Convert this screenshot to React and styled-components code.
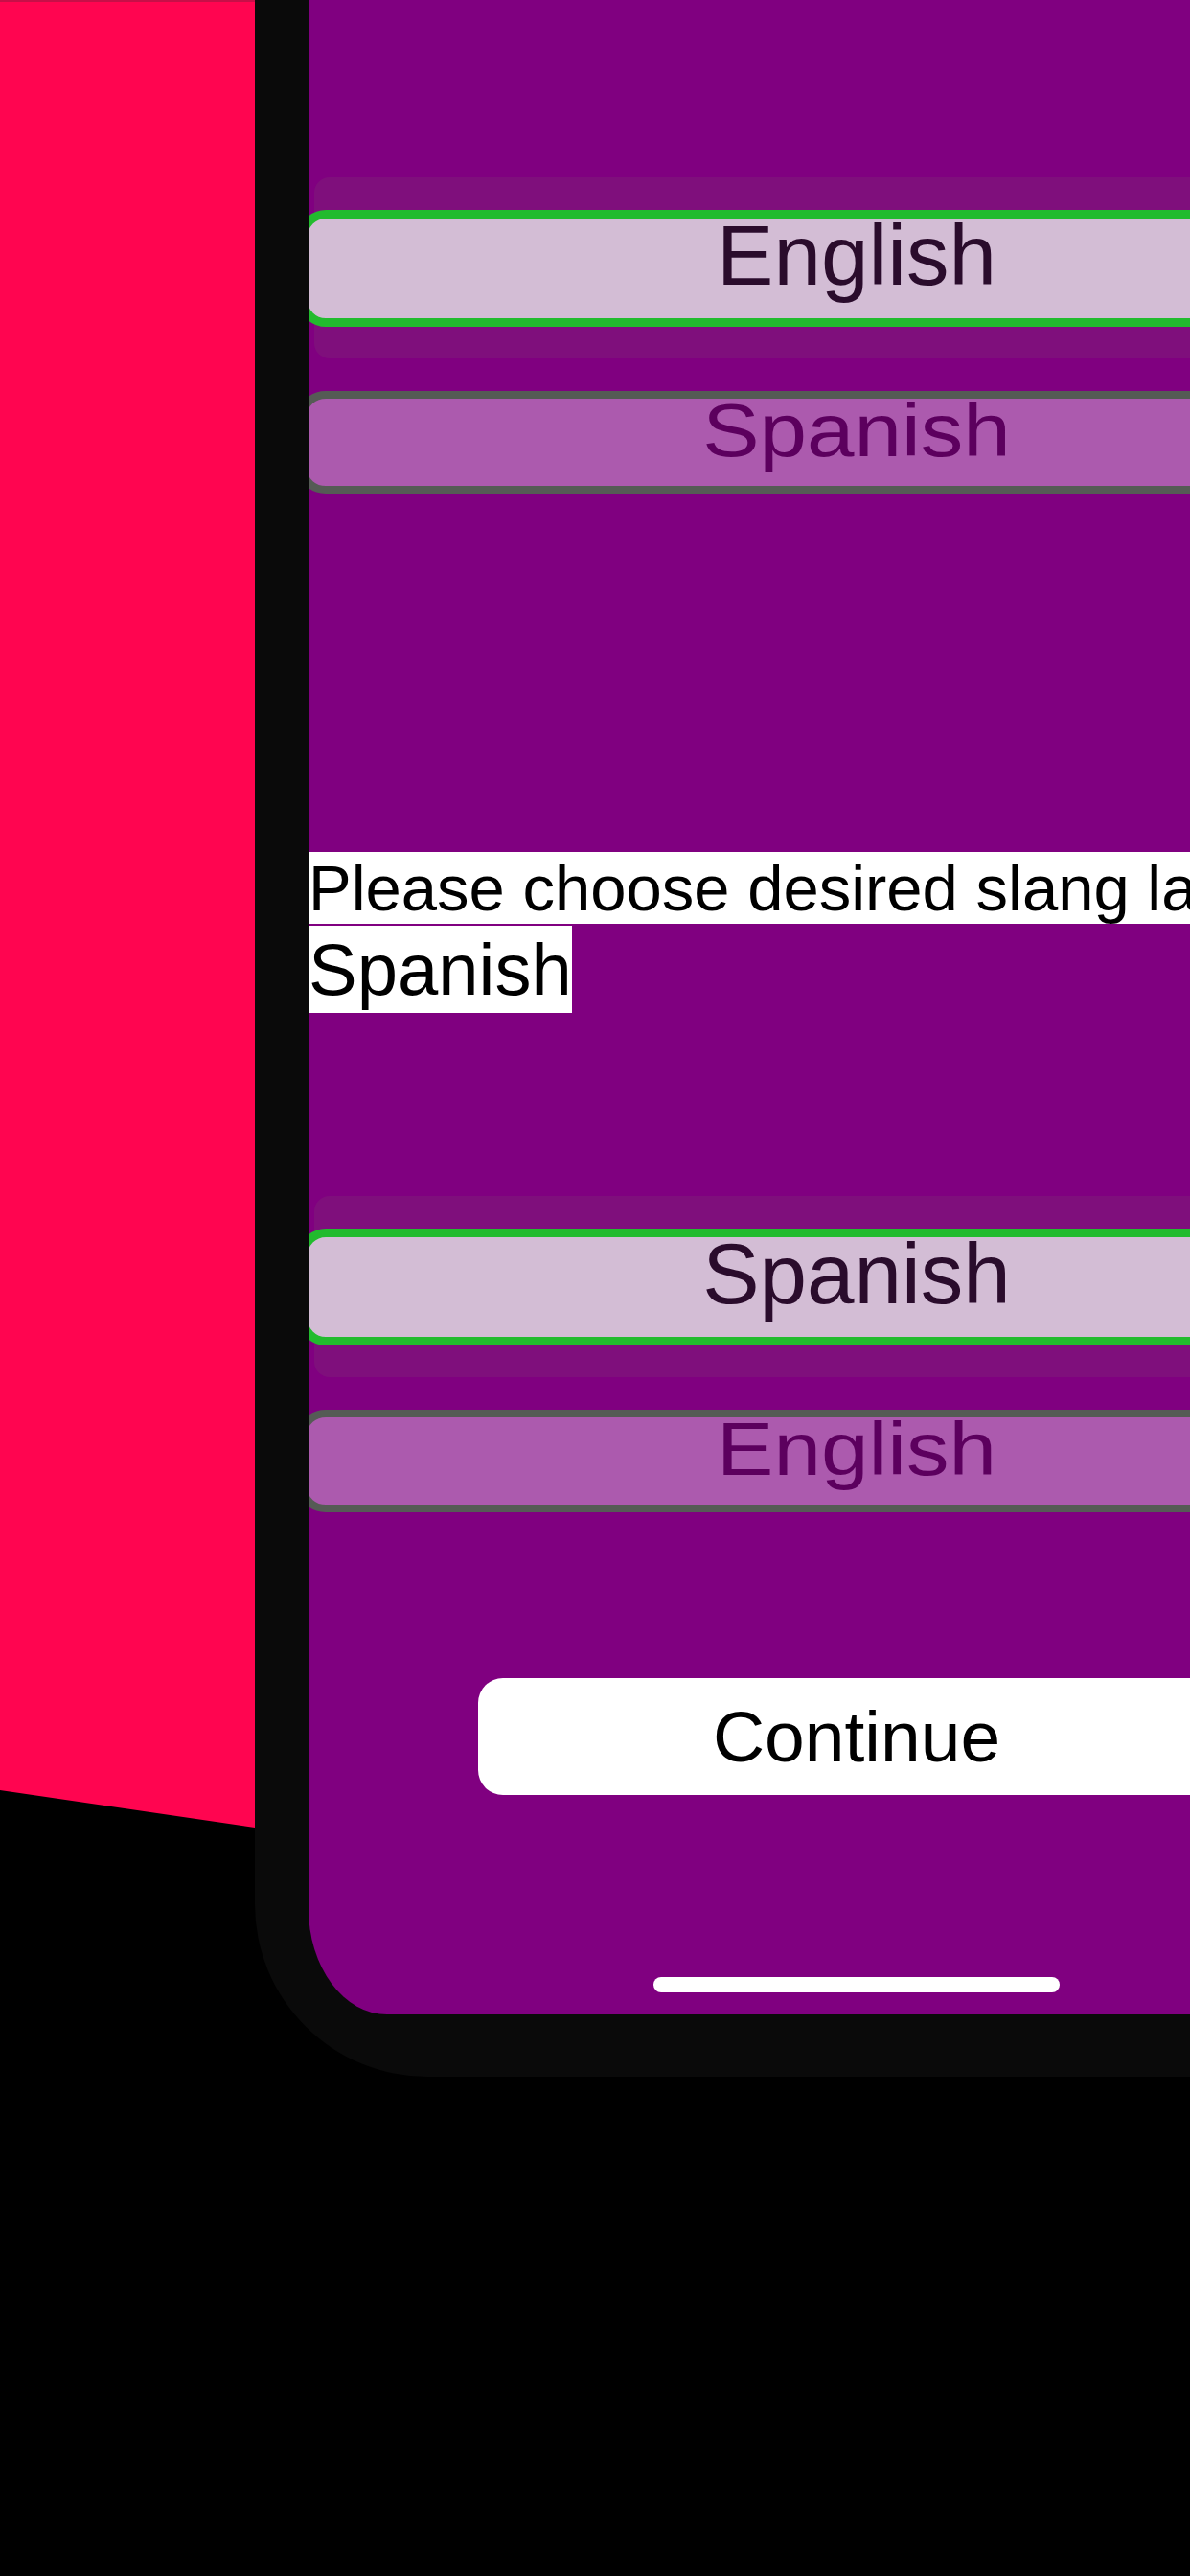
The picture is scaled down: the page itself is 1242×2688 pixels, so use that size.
import React from "react";
import styled, { createGlobalStyle, css } from "styled-components";

const Global = createGlobalStyle`
  html, body {
    margin: 0;
    padding: 0;
    background: #000;
    overflow: hidden;
  }
  * { box-sizing: border-box; }
`;

const Stage = styled.div`
  width: 1242px;
  height: 2688px;
  overflow: hidden;
  background: #000;
  display: flex;
  align-items: flex-start;
  font-family: "Liberation Sans", Arial, Helvetica, sans-serif;
`;

const Backdrop = styled.div`
  flex: 0 0 266px;
  height: 1907px;
  background: #ff0550;
  border-top: 2px solid #c70f48;
  clip-path: polygon(0 0, 100% 0, 100% 100%, 0 1868px);
`;

const Phone = styled.div`
  flex: 0 0 auto;
  background: #0a0a0a;
  padding: 0 0 65px 56px;
  border-bottom-left-radius: 180px;
`;

const Screen = styled.div`
  width: 1144px;
  height: 2102px;
  background: #800080;
  border-bottom-left-radius: 82px 110px;
  overflow: hidden;
  display: flex;
  flex-direction: column;
  padding-top: 185px;
`;

const Picker = styled.div`
  display: flex;
  flex-direction: column;
  margin-top: ${(p) => p.$gap}px;
`;

const Highlight = styled.div`
  height: 189px;
  margin: 0 6px;
  border-radius: 16px;
  background: #7f0f7c;
  display: flex;
  align-items: center;
`;

const Option = styled.div`
  flex: 0 0 auto;
  width: 1164px;
  height: 122px;
  margin: 0 -16px;
  border-radius: 28px;
  border: 9px solid;
  font-size: 89px;
  line-height: 76px;
  text-align: center;
  white-space: nowrap;
  ${(p) =>
    p.$selected
      ? css`
          border-color: #22bb2e;
          background: #d3bdd5;
          color: #2a0c2c;
        `
      : css`
          border-color: #555b55;
          background: #ac5aae;
          color: #5c005e;
          margin: 0 -10px;
          transform: scaleY(0.877);
          transform-origin: top center;
        `}
`;

const DimSlot = styled.div`
  height: 107px;
  margin-top: 34px;
  display: flex;
`;

const Prompt = styled.div`
  margin-top: 374px;
  display: flex;
  flex-direction: column;
  align-items: flex-start;
  gap: 2px;
  color: #000;
`;

const PromptLine = styled.span`
  background: #fff;
  white-space: nowrap;
  font-size: ${(p) => p.$size}px;
  line-height: ${(p) => p.$lh}px;
`;

const ContinueButton = styled.button`
  align-self: center;
  width: 790px;
  height: 122px;
  margin-top: 173px;
  border: none;
  border-radius: 26px;
  background: #fff;
  color: #000;
  font-family: inherit;
  font-size: 75px;
  display: flex;
  align-items: center;
  justify-content: center;
  padding: 0;
`;

const HomeIndicator = styled.div`
  align-self: center;
  width: 424px;
  height: 16px;
  margin-top: 190px;
  border-radius: 8px;
  background: #fff;
`;

function LanguagePicker({ selected, other, gap }) {
  return (
    <Picker $gap={gap}>
      <Highlight>
        <Option $selected>{selected}</Option>
      </Highlight>
      <DimSlot>
        <Option>{other}</Option>
      </DimSlot>
    </Picker>
  );
}

export default function App() {
  return (
    <>
      <Global />
      <Stage>
        <Backdrop />
        <Phone>
          <Screen>
            <LanguagePicker selected="English" other="Spanish" gap={0} />
            <Prompt>
              <PromptLine $size={67} $lh={75}>
                Please choose desired slang language
              </PromptLine>
              <PromptLine $size={76} $lh={91}>
                Spanish
              </PromptLine>
            </Prompt>
            <LanguagePicker selected="Spanish" other="English" gap={191} />
            <ContinueButton>Continue</ContinueButton>
            <HomeIndicator />
          </Screen>
        </Phone>
      </Stage>
    </>
  );
}
